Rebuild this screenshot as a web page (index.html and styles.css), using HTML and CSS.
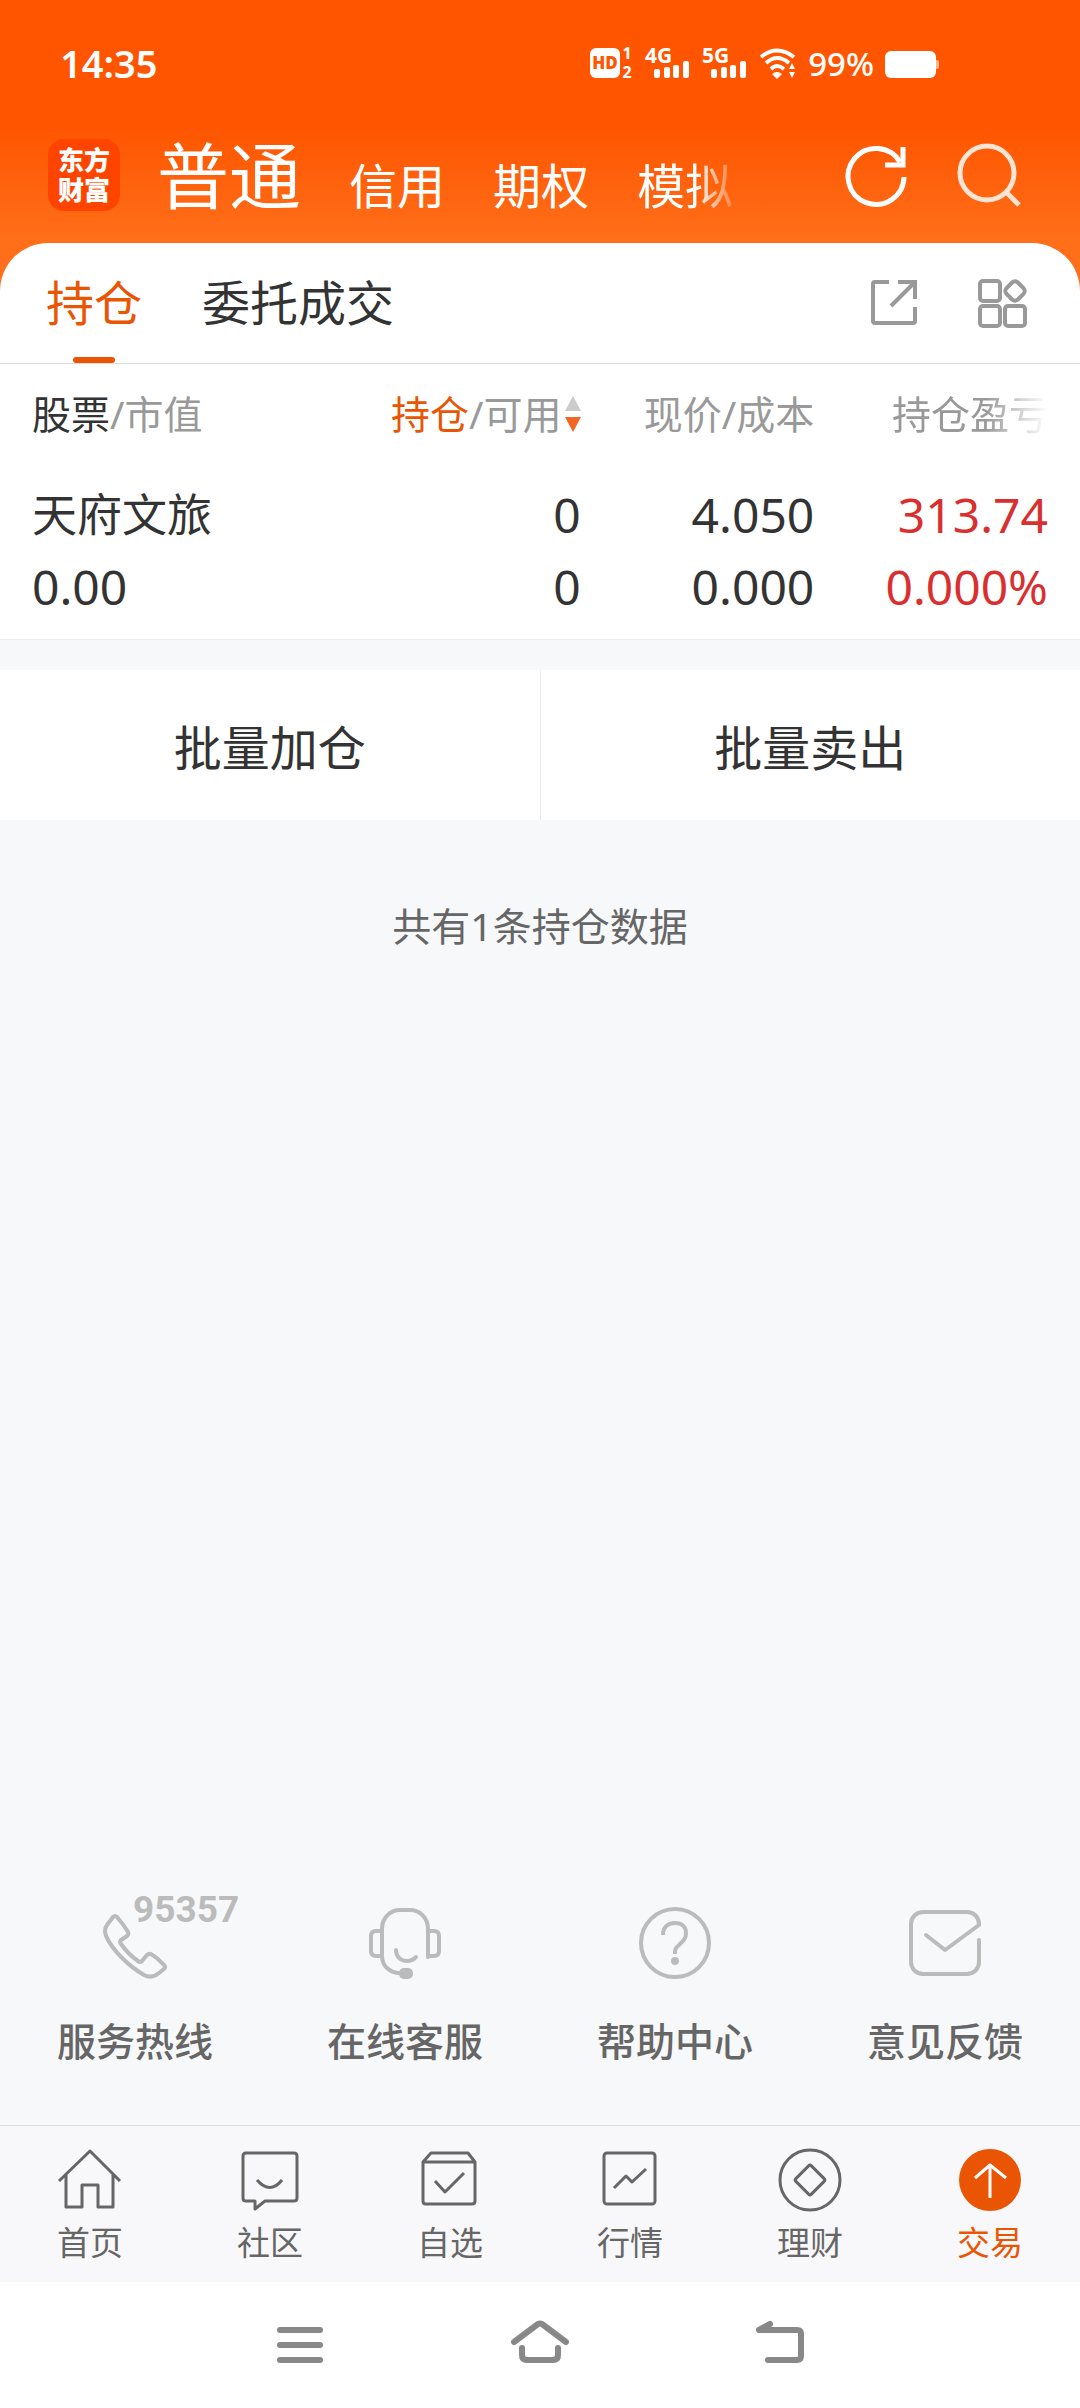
FILE: index.html
```html
<!DOCTYPE html>
<html lang="zh-CN">
<head>
    <meta charset="UTF-8">
    <meta name="viewport" content="width=device-width, initial-scale=1.0">
    <title>东方财富 - 交易</title>
    <link rel="stylesheet" href="styles.css">
</head>
<body>
    <header class="header">
        <!-- 状态栏 -->
        <div class="status-bar">
            <span class="time">14:35</span>
            <div class="status-icons">
                <svg width="44" height="32" viewBox="0 0 44 32">
                    <rect x="0" y="1" width="30" height="30" rx="6" fill="#fff"/>
                    <text class="hd-text" x="15" y="22" text-anchor="middle">HD</text>
                    <text class="sim-text" x="37" y="12" text-anchor="middle">1</text>
                    <text class="sim-text" x="37" y="31" text-anchor="middle">2</text>
                </svg>
                <svg width="46" height="32" viewBox="0 0 46 32" fill="#fff">
                    <text class="net-text" x="0" y="16">4G</text>
                    <rect x="9" y="22" width="6" height="9" rx="2"/>
                    <rect x="19" y="20" width="6" height="11" rx="2"/>
                    <rect x="28" y="18" width="6" height="13" rx="2"/>
                    <rect x="38" y="14" width="6" height="17" rx="2"/>
                </svg>
                <svg width="46" height="32" viewBox="0 0 46 32" fill="#fff">
                    <text class="net-text" x="0" y="16">5G</text>
                    <rect x="9" y="22" width="6" height="9" rx="2"/>
                    <rect x="19" y="20" width="6" height="11" rx="2"/>
                    <rect x="28" y="18" width="6" height="13" rx="2"/>
                    <rect x="38" y="14" width="6" height="17" rx="2"/>
                </svg>
                <svg width="38" height="32" viewBox="0 0 38 32">
                    <path d="M2 10Q18 -3 35 10M7 16Q18 6 30 16M12 22Q18 16 25 22" fill="none" stroke="#fff" stroke-width="4"/>
                    <path d="M13 27Q18 23 23 27L18 32ZM30 22L33 16L36 22ZM30 25H36L33 31Z" fill="#fff"/>
                </svg>
                <span class="battery-text">99%</span>
                <svg width="54" height="32" viewBox="0 0 54 32">
                    <rect x="0" y="4" width="51" height="27" rx="6" fill="#fff"/>
                    <path d="M51 13h1q2 0 2 2v5q0 2-2 2h-1z" fill="#ffb48c"/>
                </svg>
            </div>
        </div>

        <div class="top-bar">
            <div class="logo">东方<br>财富</div>
            <nav class="account-tabs">
                <a href="#" class="active">普通</a>
                <a href="#">信用</a>
                <a href="#">期权</a>
                <a href="#">模拟</a>
            </nav>
            <div class="top-actions">
                <button type="button" aria-label="刷新">
                    <svg width="64" height="64" viewBox="0 0 64 64" fill="none" stroke="#fff" stroke-width="5">
                        <path d="M60 34A28 28 0 1 1 56 19"/>
                        <path d="M59 4V22H41"/>
                    </svg>
                </button>
                <button type="button" aria-label="搜索">
                    <svg width="64" height="64" viewBox="0 0 64 64" fill="none" stroke="#ffe3d3" stroke-width="5">
                        <circle cx="31" cy="30" r="27"/>
                        <path d="M50 49L63 62"/>
                    </svg>
                </button>
            </div>
        </div>
    </header>

    <main class="content">
        <section class="sheet">
            <div class="sheet-tabs">
                <a href="#" class="active">持仓</a>
                <a href="#">委托成交</a>
                <div class="sheet-actions">
                    <button type="button" aria-label="分享">
                        <svg width="48" height="48" viewBox="0 0 48 48" fill="none" stroke="#999" stroke-width="4">
                            <path d="M19 3H5Q3 3 3 5V42Q3 44 5 44H43Q45 44 45 42V28"/>
                            <path d="M28 3H45V20M45 3L21 27"/>
                        </svg>
                    </button>
                    <button type="button" aria-label="更多功能">
                        <svg width="48" height="48" viewBox="0 0 48 48" fill="none" stroke="#999" stroke-width="4">
                            <rect x="2" y="2" width="20" height="20" rx="3"/>
                            <rect x="2" y="27" width="20" height="20" rx="3"/>
                            <rect x="27" y="27" width="20" height="20" rx="3"/>
                            <rect x="29" y="4" width="16" height="16" rx="4" transform="rotate(45 37 12)"/>
                        </svg>
                    </button>
                </div>
            </div>

            <table class="positions">
                <thead>
                    <tr>
                        <th class="col-name"><b>股票</b>/市值</th>
                        <th class="col-amount">
                            <span class="sort"><span><em>持仓</em>/可用</span><svg width="16" height="36" viewBox="0 0 16 36"><path d="M8 0L16 15H0Z" fill="#ccc"/><path d="M0 21H16L8 36Z" fill="#f26522"/></svg></span>
                        </th>
                        <th>现价/成本</th>
                        <th><span class="fade">持仓盈亏</span></th>
                    </tr>
                </thead>
                <tbody>
                    <tr>
                        <td class="stock-name">天府文旅</td>
                        <td>0</td>
                        <td>4.050</td>
                        <td class="up">313.74</td>
                    </tr>
                    <tr>
                        <td>0.00</td>
                        <td>0</td>
                        <td>0.000</td>
                        <td class="up">0.000%</td>
                    </tr>
                </tbody>
            </table>
        </section>

        <div class="batch">
            <button type="button">批量加仓</button>
            <button type="button">批量卖出</button>
        </div>

        <p class="total">共有1条持仓数据</p>

        <!-- 客服入口 -->
        <div class="support">
            <a href="#">
                <svg width="72" height="72" viewBox="0 0 72 72">
                    <path d="M14 10Q16 8 18 10Q25 18 29 25Q30 27 28 29L22 33Q20 35 22 37Q29 47 39 54Q41 56 43 54L48 48Q50 46 52 47Q59 51 65 58Q67 60 65 62L60 66Q53 72 45 68C28 58 14 43 8 31Q4 23 8 18Z"/>
                    <text class="hotline" x="34" y="15">95357</text>
                </svg>
                <span>服务热线</span>
            </a>
            <a href="#">
                <svg width="72" height="72" viewBox="0 0 72 72">
                    <path d="M59 50V22C59 11 51 3 41 3H31C21 3 13 11 13 22V49C13 59 21 66 31 66"/>
                    <path d="M13 24H7Q2 24 2 29V44Q2 49 7 49H13M59 24H65Q70 24 70 29V44Q70 49 65 49H59"/>
                    <path d="M27 43C27 50 32 54 38 54Q43 54 47 50"/>
                    <rect class="solid" x="30" y="61" width="14" height="11" rx="5"/>
                </svg>
                <span>在线客服</span>
            </a>
            <a href="#">
                <svg width="72" height="72" viewBox="0 0 72 72">
                    <circle cx="36" cy="36" r="34"/>
                    <path stroke-linecap="butt" d="M24 28C24 20 29 16 36 16C43 16 47 20 47 26C47 32 44 34 40 38C36 41 36 43 36 47"/>
                    <circle class="solid" cx="36" cy="54" r="4"/>
                </svg>
                <span>帮助中心</span>
            </a>
            <a href="#">
                <svg width="72" height="72" viewBox="0 0 72 72">
                    <path d="M70 33V55A12 12 0 0 1 58 67H14A12 12 0 0 1 2 55V17A12 12 0 0 1 14 5H58A12 12 0 0 1 70 17V18L36 43L17 28"/>
                </svg>
                <span>意见反馈</span>
            </a>
        </div>
    </main>

    <nav class="tab-bar">
        <a href="#">
            <svg width="64" height="64" viewBox="0 0 64 64"><path d="M1 33L32 3L62 33M8 27V59H24V37H40V59H55V27"/></svg>
            <span>首页</span>
        </a>
        <a href="#">
            <svg width="64" height="64" viewBox="0 0 64 64"><path d="M8 5H56Q59 5 59 8V50Q59 53 56 53H27L17 61V53H8Q5 53 5 50V8Q5 5 8 5ZM19 32Q32 47 44 32"/></svg>
            <span>社区</span>
        </a>
        <a href="#">
            <svg width="64" height="64" viewBox="0 0 64 64"><path d="M5 14L13 5H50L57 14V53Q57 56 54 56H8Q5 56 5 53ZM5 14H57M17 33L27 44L46 25"/></svg>
            <span>自选</span>
        </a>
        <a href="#">
            <svg width="64" height="64" viewBox="0 0 64 64"><rect x="6" y="5" width="51" height="51" rx="3"/><path d="M16 40L28 28L34 34L48 21"/></svg>
            <span>行情</span>
        </a>
        <a href="#">
            <svg width="64" height="64" viewBox="0 0 64 64"><circle cx="32" cy="32" r="30"/><rect x="21" y="21" width="22" height="22" rx="2" transform="rotate(45 32 32)"/></svg>
            <span>理财</span>
        </a>
        <a href="#" class="active">
            <svg width="64" height="64" viewBox="0 0 64 64"><circle cx="32" cy="32" r="31" fill="#ea5504" stroke="none"/><path d="M32 50V16M17 30L32 17L48 30" stroke="#fff"/></svg>
            <span>交易</span>
        </a>
    </nav>

    <!-- 系统导航键 -->
    <div class="system-nav">
        <button type="button" aria-label="最近任务">
            <svg width="60" height="60" viewBox="0 0 60 60"><path d="M10 15H50M10 30H50M10 45H50"/></svg>
        </button>
        <button type="button" aria-label="主屏幕">
            <svg width="60" height="60" viewBox="0 0 60 60"><path d="M4 27L28 9Q30 8 32 9L56 27M12 33V40Q12 45 17 45H43Q48 45 48 40V33"/></svg>
        </button>
        <button type="button" aria-label="返回">
            <svg width="60" height="60" viewBox="0 0 60 60"><path d="M20 9L9 15H47Q51 15 51 19V41Q51 45 47 45H18"/></svg>
        </button>
    </div>
</body>
</html>
```

FILE: styles.css
```css
* {
    box-sizing: border-box;
}
body {
    margin: 0;
    min-height: 100vh;
    display: flex;
    flex-direction: column;
    font-family: 'Noto Sans', 'Noto Sans CJK SC', sans-serif;
    background-color: #f7f8fa;
    color: #333;
}
a {
    color: inherit;
    text-decoration: none;
}
button {
    padding: 0;
    border: none;
    background: none;
    font-family: inherit;
    color: inherit;
    cursor: pointer;
}
svg {
    display: block;
    overflow: visible;
}

/* 顶部 */
.header {
    background: linear-gradient(#ff5500 126px, #ff6f1a 243px);
    color: white;
    padding-bottom: 80px;
}
.status-bar {
    display: flex;
    align-items: center;
    justify-content: space-between;
    height: 126px;
    padding: 0 141px 0 60px;
}
.time {
    font-size: 38px;
    font-weight: 600;
}
.status-icons {
    display: flex;
    align-items: center;
    gap: 11px;
}
.hd-text {
    font-size: 17px;
    font-weight: 900;
    fill: #ff5500;
}
.sim-text {
    font-size: 16px;
    font-weight: 700;
    fill: white;
}
.net-text {
    font-size: 21px;
    font-weight: 700;
    fill: white;
}
.battery-text {
    font-size: 33px;
    font-weight: 500;
}
.top-bar {
    display: flex;
    align-items: center;
    padding: 13px 60px 0 48px;
}
.logo {
    width: 72px;
    height: 72px;
    padding-top: 6px;
    border-radius: 16px;
    background-color: #ff4400;
    font-size: 26px;
    font-weight: 900;
    line-height: 30px;
    text-align: center;
}
.account-tabs {
    flex: 1;
    display: flex;
    align-items: flex-end;
    gap: 48px;
    margin-left: 37px;
    font-size: 48px;
    line-height: 50px;
}
.account-tabs .active {
    font-size: 72px;
    line-height: 72px;
}
.account-tabs a:last-child {
    -webkit-mask-image: linear-gradient(to right, #000 60%, transparent 110%);
    mask-image: linear-gradient(to right, #000 60%, transparent 110%);
}
.top-actions {
    display: flex;
    gap: 48px;
}

/* 持仓 */
.content {
    flex: 1;
    display: flex;
    flex-direction: column;
    margin-top: -48px;
}
.sheet {
    background: white;
    border-radius: 48px 48px 0 0;
    border-bottom: 1px solid #ebecee;
}
.sheet-tabs {
    display: flex;
    align-items: center;
    gap: 60px;
    height: 121px;
    padding: 0 54px 0 46px;
    border-bottom: 1px solid #ddd;
    font-size: 48px;
    line-height: 120px;
}
.sheet-tabs .active {
    position: relative;
    color: #ea5504;
}
.sheet-tabs .active::after {
    content: '';
    position: absolute;
    left: 50%;
    bottom: 0;
    width: 42px;
    height: 6px;
    margin-left: -21px;
    border-radius: 3px;
    background-color: #ea5504;
}
.sheet-actions {
    display: flex;
    gap: 60px;
    margin-left: auto;
}
.positions {
    width: 100%;
    padding: 0 32px 16px;
    border-spacing: 0;
    table-layout: fixed;
    font-size: 48px;
    line-height: 72px;
}
.positions th {
    padding: 14px 0 29px;
    font-size: 39px;
    line-height: 72px;
    font-weight: 400;
    color: #999;
    text-align: right;
    white-space: nowrap;
}
.positions td {
    padding: 0;
    text-align: right;
}
.positions th:first-child,
.positions td:first-child {
    text-align: left;
}
.positions b {
    font-weight: 400;
    color: #333;
}
.positions em {
    font-style: normal;
    color: #ea5504;
}
.col-name {
    width: 30%;
}
.col-amount {
    width: 24%;
}
.sort {
    display: flex;
    align-items: center;
    justify-content: flex-end;
    gap: 3px;
}
.fade {
    -webkit-mask-image: linear-gradient(to right, #000 60%, transparent);
    mask-image: linear-gradient(to right, #000 60%, transparent);
}
.positions .stock-name {
    font-size: 45px;
}
.positions .up {
    color: #d9302f;
}
.batch {
    display: flex;
    margin-top: 30px;
    background: white;
}
.batch button {
    flex: 1;
    height: 150px;
    font-size: 48px;
}
.batch button + button {
    border-left: 1px solid #ebecee;
}
.total {
    margin: 76px 0;
    font-size: 39px;
    line-height: 60px;
    color: #666;
    text-align: center;
}

/* 客服入口 */
.support {
    display: flex;
    margin-top: auto;
    padding-bottom: 54px;
}
.support a {
    flex: 1;
    display: flex;
    flex-direction: column;
    align-items: center;
    gap: 32px;
    font-size: 39px;
    font-weight: 500;
    line-height: 60px;
    color: #666;
}
.support svg {
    fill: none;
    stroke: #bbb;
    stroke-width: 4;
    stroke-linecap: round;
    stroke-linejoin: round;
}
.support .solid {
    fill: #bbb;
    stroke: none;
}
.support .hotline {
    font-family: Roboto, sans-serif;
    font-size: 37px;
    font-weight: 700;
    fill: #bbb;
    stroke: none;
}

/* 底部导航 */
.tab-bar {
    display: flex;
    padding: 22px 0 15px;
    border-top: 1px solid #dddfe2;
    background-color: #f8f8fa;
}
.tab-bar a {
    flex: 1;
    display: flex;
    flex-direction: column;
    align-items: center;
    gap: 7px;
    font-size: 33px;
    line-height: 48px;
    color: #666;
}
.tab-bar a.active {
    color: #ea5504;
}
.tab-bar svg {
    fill: none;
    stroke: #666;
    stroke-width: 3;
    stroke-linejoin: round;
}
.system-nav {
    display: flex;
    align-items: center;
    justify-content: center;
    gap: 180px;
    height: 126px;
    background: white;
}
.system-nav svg {
    fill: none;
    stroke: #888;
    stroke-width: 6;
    stroke-linecap: round;
    stroke-linejoin: round;
}
```
